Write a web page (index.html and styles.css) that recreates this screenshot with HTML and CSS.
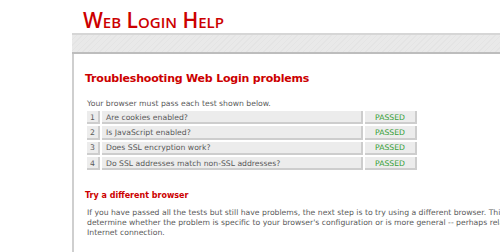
FILE: index.html
```html
<!DOCTYPE html>
<html lang="en">
<head>
    <meta charset="UTF-8">
    <title>Web Login Help</title>
    <link rel="stylesheet" href="styles.css">
</head>
<body>
    <div class="site-title">Web Login Help</div>

    <div class="page">
        <div class="band"></div>

        <div class="content">
            <h1>Troubleshooting Web Login problems</h1>
            <p class="intro">Your browser must pass each test shown below.</p>

            <!-- test results -->
            <div class="tests">
                <div class="num">1</div>
                <div class="name">Are cookies enabled?</div>
                <div class="result">PASSED</div>

                <div class="num">2</div>
                <div class="name">Is JavaScript enabled?</div>
                <div class="result">PASSED</div>

                <div class="num">3</div>
                <div class="name">Does SSL encryption work?</div>
                <div class="result">PASSED</div>

                <div class="num">4</div>
                <div class="name">Do SSL addresses match non-SSL addresses?</div>
                <div class="result">PASSED</div>
            </div>

            <h2>Try a different browser</h2>
            <p class="text">If you have passed all the tests but still have problems, the next step is to try using a different browser. This will help you determine whether the problem is specific to your browser's configuration or is more general -- perhaps related to your Internet connection.</p>
        </div>
    </div>
</body>
</html>
```

FILE: styles.css
```css
body {
    margin: 0;
    padding: 0;
    width: 560px;
    font-family: "DejaVu Sans", Verdana, sans-serif;
    font-size: 7.7px;
    color: #5a5a5a;
    background-color: #fff;
}
.site-title {
    height: 33px;
    box-sizing: border-box;
    padding: 9px 0 0 83px;
    font-family: "Open Sans", sans-serif;
    font-variant: small-caps;
    font-weight: 600;
    font-size: 21px;
    line-height: 22px;
    color: #cc0000;
}
.page {
    margin-left: 72px;
    border-left: 2px solid #cfcfcf;
    min-height: 220px;
}
.band {
    margin-left: -2px;
    height: 17px;
    border-top: 2px solid #d6d6d6;
    border-bottom: 2px solid #bdbdbd;
    background-color: #e9e9e9;
    background-image: repeating-linear-gradient(135deg, #e9e9e9 0, #e9e9e9 3px, #e4e4e4 3px, #e4e4e4 4px);
}
.content {
    padding: 18px 0 0 11px;
}
h1 {
    margin: 0;
    font-size: 11px;
    line-height: 14px;
    letter-spacing: -0.2px;
    color: #cc0000;
}
.intro {
    margin: 13px 0 3px 2px;
    line-height: 9px;
}
.tests {
    display: grid;
    grid-template-columns: 13px 261px 52px;
    grid-auto-rows: 13.3px;
    gap: 2px 2px;
    margin-left: 2px;
}
.tests div {
    display: flex;
    align-items: center;
    background-color: #ececec;
    border-right: 2px solid #cdcdcd;
    border-bottom: 2px solid #cdcdcd;
    box-sizing: border-box;
    padding-top: 1px;
}
.num {
    justify-content: center;
}
.name {
    padding-left: 4px;
}
.result {
    justify-content: center;
    color: #36a036;
}
h2 {
    margin: 21px 0 0;
    font-size: 8px;
    line-height: 10px;
    color: #cc0000;
}
.text {
    margin: 7px 0 0 2px;
    line-height: 10px;
}
```
